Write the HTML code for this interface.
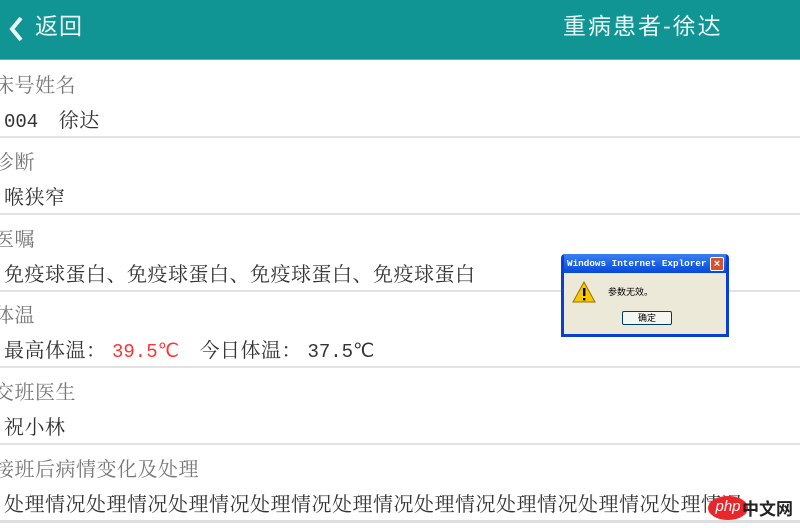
<!DOCTYPE html>
<html><head><meta charset="utf-8"><style>
*{margin:0;padding:0;box-sizing:border-box}
body{width:800px;height:528px;overflow:hidden;background:#fff;position:relative;font-family:"Liberation Serif","Noto Serif CJK SC",serif}
.hd{position:absolute;left:0;top:0;width:800px;height:60px;background:#109494;border-bottom:1px solid #4fb5b5;color:#eaf6f6}
.back{position:absolute;left:35px;top:11px;font-size:23px;font-family:"Liberation Sans","Noto Sans CJK SC",sans-serif;line-height:30px;letter-spacing:1px}
.title{position:absolute;left:563px;top:11px;font-size:23px;font-family:"Liberation Sans","Noto Sans CJK SC",sans-serif;line-height:30px;letter-spacing:2px}
.row{position:absolute;left:0;width:800px;height:77px;border-bottom:2px solid #e2e2e2}
.lb{position:absolute;left:-6px;top:8px;font-size:20px;color:#777;white-space:nowrap;letter-spacing:0.5px}
.v{position:absolute;left:4px;top:43px;font-size:20px;color:#333;white-space:nowrap;letter-spacing:0.5px}
.m{font-family:"Liberation Mono",monospace;font-size:19px;letter-spacing:0}
.dlg{position:absolute;left:561px;top:254px;width:168px;height:83px;background:#0a3fd6;border-radius:4px 4px 0 0;padding:0 3px 3px 3px}
.tb{height:19px;color:#fff;font:bold 9.3px "Liberation Mono",monospace;line-height:19px;padding-left:3px;background:linear-gradient(#3a80f3,#0548d8)}
.cl{position:absolute;right:5px;top:3px;width:14px;height:14px;background:#d8512e;border:1px solid #fff;border-radius:2px;color:#fff;font:bold 11px sans-serif;text-align:center;line-height:12px}
.bd{background:#ece9d8;height:61px;position:relative}
.msg{position:absolute;left:44px;top:12px;font:9px "Noto Sans CJK SC",sans-serif;color:#000}
.btn{position:absolute;left:58px;top:38px;width:50px;height:14px;border:1px solid #003c74;border-radius:2px;background:#f6f6f0;font:9px "Noto Sans CJK SC",sans-serif;text-align:center;line-height:12px}
</style></head><body>
<div class="hd">
<svg style="position:absolute;left:8px;top:16px" width="16" height="26"><path d="M13 2 L4 13 L13 24" stroke="#eaf6f6" stroke-width="4" fill="none"/></svg>
<div class="back">返回</div>
<div class="title">重病患者-徐达</div>
</div>
<div class="row" style="top:61px"><div class="lb">床号姓名</div><div class="v"><span class="m">004</span>　徐达</div></div>
<div class="row" style="top:138px"><div class="lb">诊断</div><div class="v">喉狭窄</div></div>
<div class="row" style="top:215px"><div class="lb">医嘱</div><div class="v">免疫球蛋白、免疫球蛋白、免疫球蛋白、免疫球蛋白</div></div>
<div class="row" style="top:291px"><div class="lb">体温</div><div class="v">最高体温： <span class="m" style="color:#f33">39.5℃</span>　今日体温： <span class="m">37.5℃</span></div></div>
<div class="row" style="top:368px"><div class="lb">交班医生</div><div class="v">祝小林</div></div>
<div class="row" style="top:445px;height:78px;border-bottom:3px solid #ddd"><div class="lb">接班后病情变化及处理</div><div class="v">处理情况处理情况处理情况处理情况处理情况处理情况处理情况处理情况处理情况</div></div>
<div class="dlg"><div class="tb">Windows Internet Explorer</div><div class="cl">×</div>
<div class="bd">
<svg style="position:absolute;left:8px;top:8px" width="24" height="22"><path d="M12 1 L23 21 L1 21Z" fill="#f5c800" stroke="#a07000"/><rect x="11" y="7" width="2.4" height="8" fill="#000"/><rect x="11" y="17" width="2.4" height="2.4" fill="#000"/></svg>
<div class="msg">参数无效。</div><div class="btn">确定</div></div></div>
<div style="position:absolute;left:708px;top:496px;width:40px;height:24px;background:#e8262c;border-radius:50%;color:#fff;font:italic 15px 'Liberation Sans',sans-serif;text-align:center;line-height:22px">php</div>
<div style="position:absolute;left:742px;top:495px;font:bold 17px 'Noto Sans CJK SC',sans-serif;color:#222">中文网</div>
</body></html>
